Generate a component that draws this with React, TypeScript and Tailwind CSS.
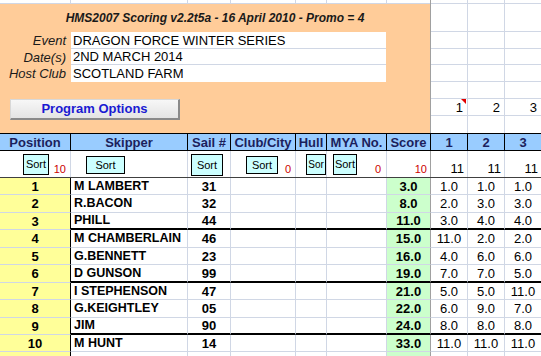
import React from 'react';

const GRID = 'grid grid-cols-[71px_117px_43px_65px_31px_60px_44px_37px_37px_36px]';

const rows = [
  { pos: 1, name: 'M LAMBERT', sail: '31', score: '3.0', r: ['1.0', '1.0', '1.0'], h: 'h-[17px]' },
  { pos: 2, name: 'R.BACON', sail: '32', score: '8.0', r: ['2.0', '3.0', '3.0'], h: 'h-[18px]' },
  { pos: 3, name: 'PHILL', sail: '44', score: '11.0', r: ['3.0', '4.0', '4.0'], h: 'h-[17px]' },
  { pos: 4, name: 'M CHAMBERLAIN', sail: '46', score: '15.0', r: ['11.0', '2.0', '2.0'], h: 'h-[18px]' },
  { pos: 5, name: 'G.BENNETT', sail: '23', score: '16.0', r: ['4.0', '6.0', '6.0'], h: 'h-[17px]' },
  { pos: 6, name: 'D GUNSON', sail: '99', score: '19.0', r: ['7.0', '7.0', '5.0'], h: 'h-[18px]' },
  { pos: 7, name: 'I STEPHENSON', sail: '47', score: '21.0', r: ['5.0', '5.0', '11.0'], h: 'h-[17px]' },
  { pos: 8, name: 'G.KEIGHTLEY', sail: '05', score: '22.0', r: ['6.0', '9.0', '7.0'], h: 'h-[18px]' },
  { pos: 9, name: 'JIM', sail: '90', score: '24.0', r: ['8.0', '8.0', '8.0'], h: 'h-[17px]' },
  { pos: 10, name: 'M HUNT', sail: '14', score: '33.0', r: ['11.0', '11.0', '11.0'], h: 'h-[17px]' },
];

const headers = ['Position', 'Skipper', 'Sail #', 'Club/City', 'Hull', 'MYA No.', 'Score', '1', '2', '3'];

// excel gridline colour
const gl = 'border-[#d0d7e5]';

const SortBtn = ({ className, label = 'Sort' }: { className: string; label?: string }) => (
  <div
    className={`absolute border border-black bg-[#ccffff] text-black leading-none flex items-center justify-center overflow-hidden whitespace-nowrap ${className}`}
  >
    {label}
  </div>
);

const App = () => {
  return (
    <div className="w-[541px] h-[356px] overflow-hidden bg-white text-black font-['Liberation_Sans',Arial,sans-serif]">
      {/* top band */}
      <div className="flex h-[133px]">
        <div className="w-[431px] flex flex-col border-r border-r-[#a0a0a0]">
          <div className={`h-[4px] border-b ${gl} flex`}>
            <div className={`w-[71px] border-r ${gl}`} />
            <div className={`w-[117px] border-r ${gl}`} />
            <div className={`w-[43px] border-r ${gl}`} />
            <div className={`w-[65px] border-r ${gl}`} />
            <div className={`w-[31px] border-r ${gl}`} />
            <div className={`w-[60px] border-r ${gl}`} />
          </div>
          <div className="flex-1 bg-[#ffcc99] flex flex-col">
            <div className="h-[28px] flex items-center justify-center text-[12px] font-bold italic text-[#1a1a1a]">
              HMS2007 Scoring v2.2t5a - 16 April 2010 - Promo = 4
            </div>
            {[
              ['Event', 'DRAGON FORCE WINTER SERIES', 'h-[17px]', `border-b ${gl}`],
              ['Date(s)', '2ND MARCH 2014', 'h-[16px]', `border-b ${gl}`],
              ['Host Club', 'SCOTLAND FARM', 'h-[17px]', ''],
            ].map(([label, value, h, b]) => (
              <div key={label} className={`flex ${h} text-[13px] leading-none`}>
                <div className="w-[71px] flex items-center justify-end pr-[5px] italic text-[#1a1a1a]">{label}</div>
                <div className={`w-[315px] bg-white flex items-center pl-[2px] ${b}`}>{value}</div>
              </div>
            ))}
            <div className="mt-[17px] ml-[10px] w-[170px] h-[21px] flex items-center justify-center bg-gradient-to-b from-[#f7f7f7] to-[#e4e4e4] border border-[#d8d8d8] border-r-2 border-b-2 border-r-[#8a8a8a] border-b-[#8a8a8a] text-[13px] font-bold text-[#1a1ad2]">
              Program Options
            </div>
          </div>
        </div>
        <div className="w-[110px] grid grid-cols-[37px_37px_36px] grid-rows-[4px_28px_17px_16px_17px_17px_17px_17px] text-[13px] leading-none">
          {Array.from({ length: 24 }).map((_, i) => {
            const col = i % 3;
            const row = Math.floor(i / 3);
            return (
              <div
                key={i}
                className={`relative flex items-center justify-end pr-[4px] ${col < 2 ? `border-r ${gl}` : ''} ${
                  row < 7 ? `border-b ${gl}` : ''
                }`}
              >
                {row === 6 ? String(col + 1) : ''}
                {row === 6 && col === 0 && (
                  <span className="absolute top-0 right-[1px] w-0 h-0 border-l-[5px] border-l-transparent border-t-[5px] border-t-[#e00000]" />
                )}
              </div>
            );
          })}
        </div>
      </div>

      {/* header row */}
      <div className={`${GRID} h-[18px] bg-[#99ccff] border-y border-black`}>
        {headers.map((h, i) => (
          <div
            key={h}
            className={`flex items-center justify-center text-[13px] font-bold leading-none text-[#1c1f5c] whitespace-nowrap ${
              i < 9 ? 'border-r border-black' : ''
            }`}
          >
            {h}
          </div>
        ))}
      </div>

      {/* sort row */}
      <div className={`${GRID} h-[27px] border-b border-[#404040] text-[11px] leading-none`}>
        <div className={`relative border-r ${gl} flex items-end justify-end pr-[4px] pb-[2px] text-[#cc0000]`}>
          <SortBtn className="left-[23px] top-[3px] w-[26px] h-[21px] text-[11px]" />
          10
        </div>
        <div className={`relative border-r ${gl}`}>
          <SortBtn className="left-[15px] top-[5px] w-[39px] h-[18px] text-[11px]" />
        </div>
        <div className={`relative border-r ${gl}`}>
          <SortBtn className="left-[3px] top-[3px] w-[32px] h-[22px] text-[11px]" />
        </div>
        <div className={`relative border-r ${gl} flex items-end justify-end pr-[4px] pb-[2px] text-[#cc0000]`}>
          <SortBtn className="left-[15px] top-[5px] w-[32px] h-[18px] text-[11px]" />
          0
        </div>
        <div className={`relative border-r ${gl}`}>
          <SortBtn label="Sor" className="left-[10px] top-[3px] w-[20px] h-[21px] text-[10px]" />
        </div>
        <div className={`relative border-r ${gl} flex items-end justify-end pr-[5px] pb-[2px] text-[#cc0000]`}>
          <SortBtn className="left-[6px] top-[3px] w-[24px] h-[21px] text-[11px]" />
          0
        </div>
        <div className="border-r border-[#a0a0a0] flex items-end justify-end pr-[3px] pb-[2px] text-[#cc0000]">10</div>
        {[0, 1, 2].map((c) => (
          <div
            key={c}
            className={`flex items-end justify-end pr-[3px] pb-[2px] text-[13px] ${c < 2 ? `border-r ${gl}` : ''}`}
          >
            11
          </div>
        ))}
      </div>

      {/* data rows */}
      {rows.map((r, idx) => {
        const thick = idx === 2 || idx === 5 || idx === 8;
        const bb = thick ? 'border-b-2 border-b-black' : 'border-b border-b-[#d0d7e5]';
        return (
          <div key={r.pos} className={`${GRID} ${r.h} leading-none text-[13px] font-bold`}>
            <div className="bg-[#ffff99] border-r border-r-black border-b border-b-[#d0d7e5] flex items-center justify-center">
              {r.pos}
            </div>
            <div className={`border-r border-r-[#d0d7e5] ${bb} flex items-center pl-[3px] whitespace-nowrap overflow-hidden text-[12.5px]`}>
              {r.name}
            </div>
            <div className={`border-r border-r-[#d0d7e5] ${bb} flex items-center justify-center`}>{r.sail}</div>
            <div className={`border-r border-r-[#d0d7e5] ${bb}`} />
            <div className={`border-r border-r-[#d0d7e5] ${bb}`} />
            <div className={`border-r border-r-[#d0d7e5] ${bb}`} />
            <div className={`bg-[#ccffcc] border-r border-r-[#a0a0a0] ${bb} flex items-center justify-center`}>
              {r.score}
            </div>
            {r.r.map((v, c) => (
              <div
                key={c}
                className={`${bb} ${c < 2 ? 'border-r border-r-[#d0d7e5]' : ''} flex items-center justify-center font-normal text-[13px]`}
              >
                {v}
              </div>
            ))}
          </div>
        );
      })}
      <div className={`${GRID} h-[4px]`}>
        <div className="bg-[#ffff99] border-r border-r-black" />
        <div className={`border-r ${gl}`} />
        <div className={`border-r ${gl}`} />
        <div className={`border-r ${gl}`} />
        <div className={`border-r ${gl}`} />
        <div className={`border-r ${gl}`} />
        <div className="bg-[#ccffcc] border-r border-r-[#a0a0a0]" />
        <div className={`border-r ${gl}`} />
        <div className={`border-r ${gl}`} />
        <div />
      </div>
    </div>
  );
};

export default App;
